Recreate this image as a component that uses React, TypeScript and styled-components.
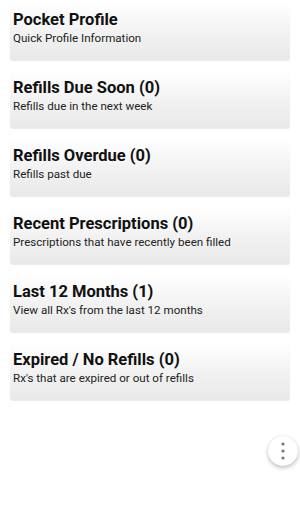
import React from "react";
import styled, { createGlobalStyle } from "styled-components";

const GlobalStyle = createGlobalStyle`
  html, body {
    margin: 0;
    padding: 0;
    background: #ffffff;
    font-family: Roboto, "Noto Sans", Arial, sans-serif;
  }
`;

const Page = styled.div`
  position: relative;
  width: 300px;
  height: 511px;
  overflow: hidden;
  background: #fff;
`;

const List = styled.div`
  display: flex;
  flex-direction: column;
  gap: 12px;
  padding: 4px 10px 0 10px;
`;

const Card = styled.div`
  height: 56px;
  box-sizing: border-box;
  padding: 6px 3px 0 3px;
  border-radius: 2px;
  background: linear-gradient(to bottom, #ffffff 0%, #f3f3f3 45%, #e9e9e9 100%);
  box-shadow: 0 1px 1px rgba(0, 0, 0, 0.08);
`;

const Title = styled.div`
  font-size: 16.5px;
  font-weight: 700;
  color: #111;
  line-height: 19px;
`;

const Sub = styled.div`
  font-size: 11.6px;
  color: #222;
  line-height: 14px;
  margin-top: 2px;
`;

const Fab = styled.button`
  position: absolute;
  left: 268px;
  top: 436px;
  width: 30px;
  height: 30px;
  border-radius: 50%;
  border: none;
  padding: 0;
  background: #fff;
  box-shadow: 0 2px 4px rgba(0, 0, 0, 0.25), 0 0 1px rgba(0, 0, 0, 0.12);
  display: flex;
  align-items: center;
  justify-content: center;
`;

const items = [
  { title: "Pocket Profile", sub: "Quick Profile Information" },
  { title: "Refills Due Soon (0)", sub: "Refills due in the next week" },
  { title: "Refills Overdue (0)", sub: "Refills past due" },
  { title: "Recent Prescriptions (0)", sub: "Prescriptions that have recently been filled" },
  { title: "Last 12 Months (1)", sub: "View all Rx's from the last 12 months" },
  { title: "Expired / No Refills (0)", sub: "Rx's that are expired or out of refills" },
];

export default function App() {
  return (
    <Page>
      <GlobalStyle />
      <List>
        {items.map((it) => (
          <Card key={it.title}>
            <Title>{it.title}</Title>
            <Sub>{it.sub}</Sub>
          </Card>
        ))}
      </List>
      <Fab>
        <svg width="4" height="18" viewBox="0 0 4 18">
          <circle cx="2" cy="2" r="1.6" fill="#757575" />
          <circle cx="2" cy="9" r="1.6" fill="#757575" />
          <circle cx="2" cy="16" r="1.6" fill="#757575" />
        </svg>
      </Fab>
    </Page>
  );
}
